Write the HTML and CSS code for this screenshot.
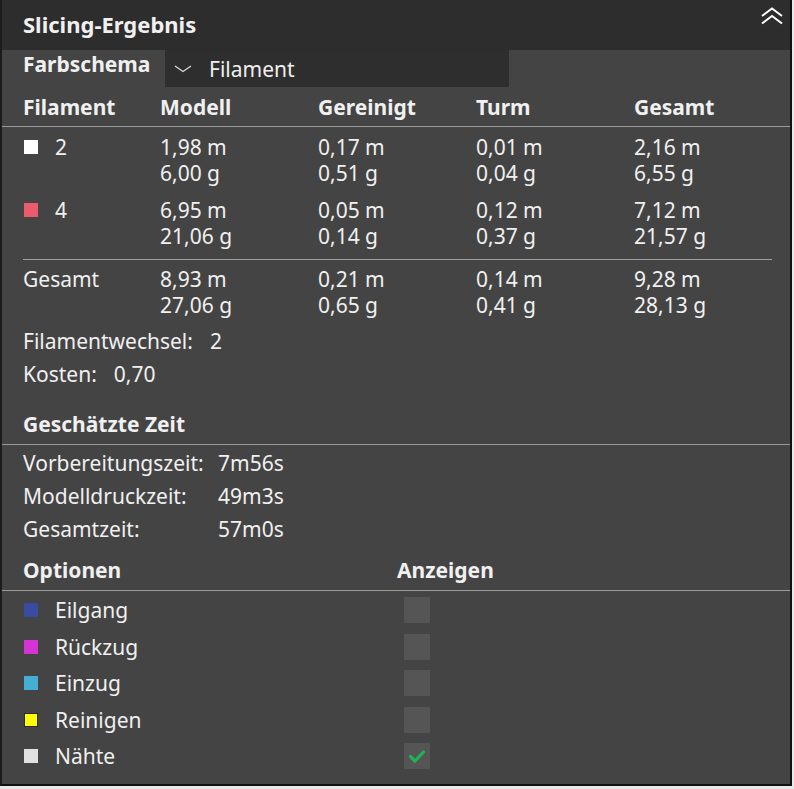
FILE: index.html
```html
<!DOCTYPE HTML>
<html lang="de">
<head>
    <meta charset="utf-8">
    <title>Slicing-Ergebnis</title>
    <link rel="stylesheet" href="styles.css">
</head>
<body>
<div class="panel">
    <div class="titlebar">
        <span class="title">Slicing-Ergebnis</span>
        <svg class="collapse" width="24" height="18" viewBox="0 0 24 18">
            <path d="M2 9 L12 1.5 L22 9" />
            <path d="M2 16.5 L12 9 L22 16.5" />
        </svg>
    </div>

    <div class="scheme">
        <span class="scheme-label">Farbschema</span>
        <div class="combo">
            <svg class="combo-arrow" width="18" height="8" viewBox="0 0 18 8">
                <path d="M1 1 L9 6.5 L17 1" />
            </svg>
            <span>Filament</span>
        </div>
    </div>

    <!-- Verbrauch pro Filament -->
    <div class="usage-head grid5">
        <span>Filament</span>
        <span>Modell</span>
        <span>Gereinigt</span>
        <span>Turm</span>
        <span>Gesamt</span>
    </div>
    <div class="usage-row grid5">
        <span class="fil"><i class="swatch sw-white"></i>2</span>
        <span>1,98 m<br>6,00 g</span>
        <span>0,17 m<br>0,51 g</span>
        <span>0,01 m<br>0,04 g</span>
        <span>2,16 m<br>6,55 g</span>
    </div>
    <div class="usage-row grid5">
        <span class="fil"><i class="swatch sw-red"></i>4</span>
        <span>6,95 m<br>21,06 g</span>
        <span>0,05 m<br>0,14 g</span>
        <span>0,12 m<br>0,37 g</span>
        <span>7,12 m<br>21,57 g</span>
    </div>
    <div class="sep"></div>
    <div class="usage-row total grid5">
        <span>Gesamt</span>
        <span>8,93 m<br>27,06 g</span>
        <span>0,21 m<br>0,65 g</span>
        <span>0,14 m<br>0,41 g</span>
        <span>9,28 m<br>28,13 g</span>
    </div>

    <div class="extra">
        <div>Filamentwechsel:<span class="val">2</span></div>
        <div>Kosten:<span class="val">0,70</span></div>
    </div>

    <!-- Zeiten -->
    <div class="section-head">Geschätzte Zeit</div>
    <div class="times">
        <span>Vorbereitungszeit:</span><span>7m56s</span>
        <span>Modelldruckzeit:</span><span>49m3s</span>
        <span>Gesamtzeit:</span><span>57m0s</span>
    </div>

    <!-- Anzeigeoptionen -->
    <div class="section-head options-head">
        <span>Optionen</span>
        <span>Anzeigen</span>
    </div>
    <ul class="options">
        <li><span class="opt"><i class="swatch sw-blue"></i>Eilgang</span><span class="check"></span></li>
        <li><span class="opt"><i class="swatch sw-magenta"></i>Rückzug</span><span class="check"></span></li>
        <li><span class="opt"><i class="swatch sw-cyan"></i>Einzug</span><span class="check"></span></li>
        <li><span class="opt"><i class="swatch sw-yellow"></i>Reinigen</span><span class="check"></span></li>
        <li><span class="opt"><i class="swatch sw-grey"></i>Nähte</span>
            <span class="check">
                <svg width="26" height="26" viewBox="0 0 26 26">
                    <path d="M6.5 13.5 L11 18 L19.5 9" />
                </svg>
            </span>
        </li>
    </ul>
</div>
</body>
</html>
```

FILE: styles.css
```css
html, body{
    margin: 0;
    padding: 0;
}
body{
    background: #e9e9e9;
    font-family: "Noto Sans", "Open Sans", sans-serif;
    font-size: 21px;
    color: #f0f0f0;
}
.panel{
    width: 788px;
    height: 784px;
    background: #444444;
    border-left: 2px solid #1c1c1c;
    border-right: 2px solid #111111;
    border-bottom: 2px solid #111111;
    overflow: hidden;
}

/* Titelleiste */
.titlebar{
    height: 50px;
    background: #2d2d2d;
    display: flex;
    align-items: center;
    justify-content: space-between;
    padding: 0 6px 0 21px;
}
.title{
    font-weight: 700;
    font-size: 22px;
    margin-top: -3px;
}
.collapse{
    align-self: flex-start;
    margin-top: 7px;
}
.collapse path{
    fill: none;
    stroke: #ffffff;
    stroke-width: 2;
}

/* Farbschema */
.scheme{
    height: 37px;
    display: flex;
    padding-left: 21px;
}
.scheme-label{
    width: 142px;
    font-weight: 700;
    line-height: 26px;
    padding-top: 1px;
}
.combo{
    width: 344px;
    height: 37px;
    background: #2e2e2e;
    display: flex;
    align-items: center;
}
.combo-arrow{
    margin: 0 17px 0 9px;
}
.combo-arrow path{
    fill: none;
    stroke: #d8d8d8;
    stroke-width: 1.3;
}

/* Tabelle */
.grid5{
    display: grid;
    grid-template-columns: 137px 158px 158px 158px 1fr;
    padding-left: 21px;
}
.usage-head{
    height: 39px;
    align-items: center;
    font-weight: 700;
    border-bottom: 1px solid #9a9a9a;
}
.usage-row{
    padding-top: 7px;
    padding-bottom: 4px;
    line-height: 26px;
}
.usage-row.total{
    padding-top: 6px;
}
.fil{
    display: flex;
    align-items: flex-start;
}
.swatch{
    display: inline-block;
    width: 14px;
    height: 14px;
    box-sizing: border-box;
    margin: 6px 17px 0 1px;
}
.sw-white{ background: #ffffff; }
.sw-red{ background: #ec5a6d; }
.sw-blue{ background: #3a4ca2; }
.sw-magenta{ background: #d633d4; }
.sw-cyan{ background: #46aed2; }
.sw-yellow{ background: #ffff00; border: 1px solid #2a2a2a; }
.sw-grey{ background: #e2e2e2; }

.sep{
    height: 1px;
    background: #a0a0a0;
    margin: 6px 18px 0 21px;
}

.extra{
    margin-top: 3px;
    padding-left: 21px;
    line-height: 33px;
}
.val{
    margin-left: 17px;
}

/* Abschnittsköpfe */
.section-head{
    margin-top: 13px;
    height: 40px;
    display: flex;
    align-items: center;
    padding-left: 21px;
    font-weight: 700;
    border-bottom: 1px solid #9a9a9a;
}
.times{
    display: grid;
    grid-template-columns: 195px 1fr;
    padding: 2px 0 0 21px;
    line-height: 33px;
}
.options-head{
    margin-top: 4px;
}
.options-head span:first-child{
    width: 374px;
}

/* Optionen */
.options{
    margin: 0;
    padding: 1px 0 0 21px;
    list-style-type: none;
}
.options li{
    height: 36.5px;
    display: flex;
    align-items: center;
}
.opt{
    width: 381px;
    display: flex;
    align-items: center;
}
.opt .swatch{
    margin-top: 0;
}
.check{
    width: 26px;
    height: 26px;
    background: #555555;
}
.check svg{
    display: block;
}
.check path{
    fill: none;
    stroke: #1fb457;
    stroke-width: 3.2;
    stroke-linecap: round;
    stroke-linejoin: round;
}
```
